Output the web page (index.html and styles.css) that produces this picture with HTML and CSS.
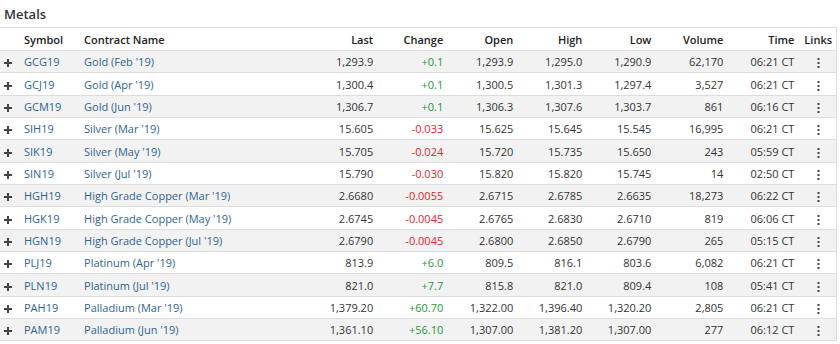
FILE: index.html
```html
<!DOCTYPE html>
<html lang="en">
<head>
    <meta charset="UTF-8">
    <title>Metals Quotes</title>
    <link rel="stylesheet" href="styles.css">
</head>
<body>

<section class="quotes">
    <h2 class="quotes-title">Metals</h2>
    <table class="quotes-table">
        <colgroup>
            <col class="c-plus"><col class="c-sym"><col class="c-name"><col class="c-last">
            <col class="c-chg"><col class="c-open"><col class="c-high"><col class="c-low">
            <col class="c-vol"><col class="c-time"><col class="c-links">
        </colgroup>
        <thead>
            <tr>
                <th></th>
                <th class="left">Symbol</th>
                <th class="left">Contract Name</th>
                <th>Last</th>
                <th>Change</th>
                <th>Open</th>
                <th>High</th>
                <th>Low</th>
                <th>Volume</th>
                <th>Time</th>
                <th class="center">Links</th>
            </tr>
        </thead>
        <tbody id="quoteRows"></tbody>
    </table>
</section>

<script>
    // symbol, name, last, change, open, high, low, volume, time
    const quotes = [
        ['GCG19', "Gold (Feb '19)", '1,293.9', '+0.1', '1,293.9', '1,295.0', '1,290.9', '62,170', '06:21 CT'],
        ['GCJ19', "Gold (Apr '19)", '1,300.4', '+0.1', '1,300.5', '1,301.3', '1,297.4', '3,527', '06:21 CT'],
        ['GCM19', "Gold (Jun '19)", '1,306.7', '+0.1', '1,306.3', '1,307.6', '1,303.7', '861', '06:16 CT'],
        ['SIH19', "Silver (Mar '19)", '15.605', '-0.033', '15.625', '15.645', '15.545', '16,995', '06:21 CT'],
        ['SIK19', "Silver (May '19)", '15.705', '-0.024', '15.720', '15.735', '15.650', '243', '05:59 CT'],
        ['SIN19', "Silver (Jul '19)", '15.790', '-0.030', '15.820', '15.820', '15.745', '14', '02:50 CT'],
        ['HGH19', "High Grade Copper (Mar '19)", '2.6680', '-0.0055', '2.6715', '2.6785', '2.6635', '18,273', '06:22 CT'],
        ['HGK19', "High Grade Copper (May '19)", '2.6745', '-0.0045', '2.6765', '2.6830', '2.6710', '819', '06:06 CT'],
        ['HGN19', "High Grade Copper (Jul '19)", '2.6790', '-0.0045', '2.6800', '2.6850', '2.6790', '265', '05:15 CT'],
        ['PLJ19', "Platinum (Apr '19)", '813.9', '+6.0', '809.5', '816.1', '803.6', '6,082', '06:21 CT'],
        ['PLN19', "Platinum (Jul '19)", '821.0', '+7.7', '815.8', '821.0', '809.4', '108', '05:41 CT'],
        ['PAH19', "Palladium (Mar '19)", '1,379.20', '+60.70', '1,322.00', '1,396.40', '1,320.20', '2,805', '06:21 CT'],
        ['PAM19', "Palladium (Jun '19)", '1,361.10', '+56.10', '1,307.00', '1,381.20', '1,307.00', '277', '06:12 CT']
    ];

    const plusIcon = '<svg class="plus" width="8" height="8" viewBox="0 0 8 8"><rect x="3" y="0" width="2" height="8"/><rect x="0" y="3" width="8" height="2"/></svg>';
    const moreIcon = '<svg class="more" width="3" height="10" viewBox="0 0 3 10"><rect x="0.5" y="0" width="2" height="2"/><rect x="0.5" y="4" width="2" height="2"/><rect x="0.5" y="8" width="2" height="2"/></svg>';

    const tbody = document.getElementById('quoteRows');
    quotes.forEach(q => {
        const tr = document.createElement('tr');
        const dir = q[3].startsWith('-') ? 'down' : 'up';
        tr.innerHTML = `
            <td class="center">${plusIcon}</td>
            <td class="left"><a href="#">${q[0]}</a></td>
            <td class="left"><a href="#">${q[1]}</a></td>
            <td>${q[2]}</td>
            <td class="${dir}">${q[3]}</td>
            <td>${q[4]}</td>
            <td>${q[5]}</td>
            <td>${q[6]}</td>
            <td>${q[7]}</td>
            <td>${q[8]}</td>
            <td class="center">${moreIcon}</td>
        `;
        tbody.appendChild(tr);
    });
</script>

</body>
</html>
```

FILE: styles.css
```css
body {
    margin: 0;
    font-family: 'Open Sans', sans-serif;
    color: #333;
    background: #fff;
}

.quotes {
    width: 837px;
}

.quotes-title {
    margin: 0;
    height: 27px;
    padding-left: 4px;
    font-size: 13px;
    font-weight: 600;
    line-height: 28px;
    color: #333;
    border-bottom: 1px solid #ddd;
}

.quotes-table {
    width: 837px;
    table-layout: fixed;
    border-collapse: collapse;
    font-size: 11px;
    border-right: 1px solid #ddd;
}

.c-plus { width: 18px; }
.c-sym { width: 60px; }
.c-name { width: 241px; }
.c-last { width: 60px; }
.c-chg { width: 70px; }
.c-open { width: 70px; }
.c-high { width: 69px; }
.c-low { width: 69px; }
.c-vol { width: 72px; }
.c-time { width: 71px; }
.c-links { width: 36px; }

.quotes-table th,
.quotes-table td {
    padding: 0 6px;
    text-align: right;
    white-space: nowrap;
    border-bottom: 1px solid #ddd;
}

.quotes-table th {
    height: 22px;
    font-weight: 600;
    color: #222;
}

.quotes-table td {
    height: 21.35px;
}

.quotes-table tbody tr:nth-child(odd) {
    background-color: #f2f2f2;
}

.quotes-table .left { text-align: left; }
.quotes-table .center { text-align: center; padding: 0; }

.quotes-table a {
    color: #2f6496;
    text-decoration: none;
}

.up { color: #1b9a36; }
.down { color: #e0262b; }

.plus,
.more {
    display: inline-block;
    vertical-align: middle;
    fill: #444;
}

.plus { margin-left: -2px; }
```
